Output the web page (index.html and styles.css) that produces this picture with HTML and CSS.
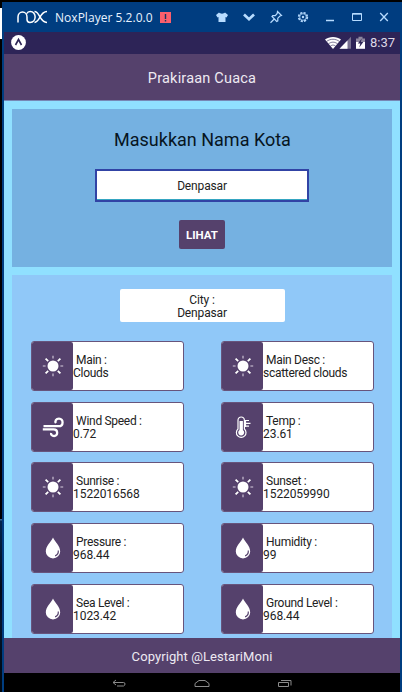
FILE: index.html
```
<!DOCTYPE html>
<html lang="id">
<head>
<meta charset="utf-8">
<title>Prakiraan Cuaca</title>
<link rel="stylesheet" href="styles.css">
</head>
<body>
<svg class="defs" width="0" height="0">
  <symbol id="sun" viewBox="0 0 22 22"><circle cx="11" cy="11" r="5.5" fill="#fff"/><path d="M11 .8v2.8M11 18.4v2.8M.8 11h2.8M18.4 11h2.8" stroke="#d9d0e0" stroke-width="1.1"/><path d="M3.600 3.600l2.600 2.600M18.400 3.600l-2.600 2.600M3.600 18.400l2.600-2.600M18.400 18.400l-2.600-2.600" stroke="#fff" stroke-width="1.8"/></symbol>
  <symbol id="wind" viewBox="0 0 22 22"><g fill="none" stroke="#fff" stroke-width="2.300"><path d="M1.500 10.200h15c5.500 0 5.200-7.600.5-7.600-3 0-4.400 2.400-3 4.400"/><path d="M.8 13.400h10.700c5 0 4.600 6.600.6 6.600-2.300 0-3.300-1.400-3-3"/></g></symbol>
  <symbol id="temp" viewBox="0 0 22 22"><path d="M6 13V4.200a3.200 3.200 0 0 1 6.400 0V13a4.800 4.800 0 1 1-6.400 0z" fill="none" stroke="#fff" stroke-width="1.2"/><path d="M7.500 5h3.400v9a3 3 0 1 1-3.400 0z" fill="#fff"/><path d="M14 4.500h3M14 7.300h4.500M14 10.100h3M13.500 4v7" fill="none" stroke="#fff" stroke-width="1.2"/></symbol>
  <symbol id="drop" viewBox="0 0 22 22"><path d="M11 .5C13 5 18.200 9 18.200 14.400a7.200 7 0 0 1-14.400 0C3.800 9 9 5 11 .5z" fill="#fff"/><path d="M16.300 13.500c.2 2.800-1 4.600-3.200 5.400" fill="none" stroke="#55416c" stroke-width="1.2"/></symbol>
</svg>
<div class="desktop"><i class="strip-white"></i><i class="strip-navy"></i></div>
<div class="window">
  <div class="titlebar">
    <svg class="logo" width="31" height="14" viewBox="0 0 31 14" fill="none" stroke="#fff" stroke-width="1.5"><path d="M1 12.500V7a4.500 5 0 0 1 9 0v2.500c0 1.800 1.200 2.900 3 2.900 6.800 0 6.800-10.800.2-10.800-1.800 0-2.800.8-3.200 2M17.500 1.600c5.500 0 5 10.800 12.500 10.800M30 1.600c-7.500 0-7 10.800-12.500 10.800"/></svg>
    <span class="product">NoxPlayer 5.2.0.0</span>
    <span class="alert"><svg width="11" height="11"><path d="M5.500 2v5M5.500 8v1.500" stroke="#173463" stroke-width="1.400"/></svg></span>
    <div class="tools">
      <svg viewBox="0 0 14 14"><path d="M4 2.500c1 1.500 5 1.500 6 0L13 5l-1.500 2.600L10.500 7v5h-7V7l-1 .6L1 5z" fill="#b7dcff"/></svg>
      <svg viewBox="0 0 14 14"><path d="M2 4.500l5 4.700 5-4.700" fill="none" stroke="#b7dcff" stroke-width="2.700"/></svg>
      <svg viewBox="0 0 14 14"><path d="M8.500 1.500l4 4-1.500.5-2.200 2.200v2.600L7.700 11.500 3 6.500l.8-.9h2.500L8.200 3.500zM5.500 8.800L1.500 12.700" fill="none" stroke="#b7dcff" stroke-width="1.200"/></svg>
      <svg viewBox="0 0 14 14"><circle cx="7" cy="7" r="4.300" fill="none" stroke="#b7dcff" stroke-width="1.700" stroke-dasharray="2.200 1.177"/><circle cx="7" cy="7" r="3.300" fill="none" stroke="#b7dcff" stroke-width=".8"/><circle cx="7" cy="7" r="1.200" fill="#b7dcff"/></svg>
      <svg viewBox="0 0 14 14"><path d="M3 10.500h8" stroke="#b7dcff" stroke-width="1.500"/></svg>
      <svg viewBox="0 0 14 14"><path d="M2.500 3.500h9v7h-9zM2 4.200h10" fill="none" stroke="#b7dcff"/></svg>
      <svg viewBox="0 0 14 14"><path d="M3.200 3l7.600 8M10.800 3l-7.600 8" stroke="#b7dcff" stroke-width="1.300"/></svg>
    </div>
  </div>
  <div class="screen">
    <div class="statusbar">
      <svg width="15" height="15" viewBox="0 0 15 15"><circle cx="7.500" cy="7.500" r="7.400" fill="#fff"/><path d="M4.500 10L7.500 4.500l3 5.500" fill="none" stroke="#2d2555" stroke-width="1.600"/></svg>
      <div class="status-right">
        <svg width="42" height="14" viewBox="0 0 42 14"><path d="M0 3.500C4 0 12 0 16 3.500L8 13z" fill="#fff"/><path d="M1.500 5.500c4-3 9-3 13 0M3.500 7.800c3-2.200 6-2.200 9 0M5.500 10c2-1.300 3-1.300 5 0" fill="none" stroke="#2d2555" stroke-width=".6"/><path d="M14.500 12.800L26 .8v12z" fill="#77708f"/><path d="M14.500 12.800L22.500 4.500v8.300z" fill="#fff"/><path d="M31 2.500h2.500V.8h4v1.700H40v5h-9z" fill="#8d879f"/><path d="M31 6h9v6.800h-9z" fill="#fff"/><path d="M36.800 2.500l-4 5h2.500l-1 4 4-5.500h-2.500z" fill="#2d2555"/></svg>
        <span class="clock">8:37</span>
      </div>
    </div>
    <header class="appbar"><span>Prakiraan Cuaca</span></header>
    <main class="content">
      <section class="search">
        <h1><span>Masukkan Nama Kota</span></h1>
        <div class="field"><span>Denpasar</span></div>
        <div class="button"><span>LIHAT</span></div>
      </section>
      <section class="results">
        <div class="city"><span>City :</span><span>Denpasar</span></div>
        <div class="grid">
          <div class="card"><div class="icon"><svg><use href="#sun"/></svg></div><div class="info"><span class="label">Main :</span><span>Clouds</span></div></div>
          <div class="card"><div class="icon"><svg><use href="#sun"/></svg></div><div class="info"><span class="label">Main Desc :</span><span>scattered clouds</span></div></div>
          <div class="card"><div class="icon"><svg><use href="#wind"/></svg></div><div class="info"><span class="label">Wind Speed :</span><span class="number">0.72</span></div></div>
          <div class="card"><div class="icon"><svg><use href="#temp"/></svg></div><div class="info"><span class="label">Temp :</span><span class="number">23.61</span></div></div>
          <div class="card"><div class="icon"><svg><use href="#sun"/></svg></div><div class="info"><span class="label">Sunrise :</span><span class="number">1522016568</span></div></div>
          <div class="card"><div class="icon"><svg><use href="#sun"/></svg></div><div class="info"><span class="label">Sunset :</span><span class="number">1522059990</span></div></div>
          <div class="card"><div class="icon"><svg><use href="#drop"/></svg></div><div class="info"><span class="label">Pressure :</span><span class="number">968.44</span></div></div>
          <div class="card"><div class="icon"><svg><use href="#drop"/></svg></div><div class="info"><span class="label">Humidity :</span><span class="number">99</span></div></div>
          <div class="card"><div class="icon"><svg><use href="#drop"/></svg></div><div class="info"><span class="label">Sea Level :</span><span class="number">1023.42</span></div></div>
          <div class="card"><div class="icon"><svg><use href="#drop"/></svg></div><div class="info"><span class="label">Ground Level :</span><span class="number">968.44</span></div></div>
        </div>
      </section>
    </main>
    <footer class="footer"><span>Copyright @LestariMoni</span></footer>
    <nav class="navbar">
      <svg viewBox="0 0 16 10"><path d="M5 1L2 3.500 5 6M2 3.500h10.500q1.500 0 1.500 1.500t-1.500 2H6"/></svg>
      <svg viewBox="0 0 16 10"><path d="M1 7.500V4.500L5 1.500h6l4 3v3z"/></svg>
      <svg viewBox="0 0 16 10"><path d="M1.500 3.500h10v4h-10zM4 1.500h10v5"/></svg>
    </nav>
  </div>
</div>
</body>
</html>
```
FILE: styles.css
```
* { box-sizing: border-box; }
body {
  margin: 0;
  width: 402px;
  height: 692px;
  overflow: hidden;
  display: flex;
  background: #000;
  font-family: Roboto, sans-serif;
  font-size: 12px;
}
.defs { position: absolute; }
.desktop { width: 2px; height: 692px; padding-top: 8px; display: flex; flex-direction: column; justify-content: space-between; }
.strip-white { height: 31px; background: #fff; }
.strip-navy { height: 173px; background: linear-gradient(#3a6a94 0 1px, #02264d 2px, #000b18 40%, #03142a 60%, #00070f); }
.window { width: 400px; height: 690px; margin-top: 2px; background: #003d80; }
.titlebar { height: 30px; display: flex; align-items: center; padding-left: 15px; }
.product { width: 97px; margin-left: 7px; font-family: "Open Sans", sans-serif; font-size: 12px; letter-spacing: 0.03px; color: #e8f3ff; white-space: nowrap; }
.alert { width: 11px; height: 11px; margin-left: 8px; background: #fb5f6c; }
.alert svg { display: block; }
.tools { display: flex; gap: 13px; margin-left: 44px; }
.tools svg { width: 14px; height: 14px; flex: none; }
.screen { width: 396px; height: 660px; margin-left: 2px; display: flex; flex-direction: column; }
.statusbar { height: 22px; flex: none; background: #2d2457; display: flex; justify-content: space-between; align-items: center; padding: 0 5px 1px 7px; }
.status-right { display: flex; align-items: center; gap: 3px; }
.clock { color: #ddd9e6; font-size: 13px; line-height: 14px; }
.appbar { height: 47px; flex: none; background: #55416c; border-bottom: 1px solid #7788b5; display: flex; align-items: center; justify-content: center; padding-top: 2px; color: #eeeaf2; font-size: 14.5px; letter-spacing: .2px; }
.content { height: 537px; flex: none; background: #90e0ff; padding: 8px 8px 0; display: flex; flex-direction: column; gap: 8px; }
.search { height: 158px; flex: none; background: #75b1e1; display: flex; flex-direction: column; align-items: center; }
h1 { margin: 19px 0 0; height: 24px; line-height: 24px; font-size: 18px; font-weight: 400; color: #071521; letter-spacing: 0; padding-left: 1px; }
.field { width: 214px; height: 33px; margin-top: 17px; border: 2px solid #3143a5; background: #fff; box-shadow: inset 0 -1px #35a6c2; text-align: center; line-height: 30px; color: #222; letter-spacing: -.15px; }
.button { width: 46px; height: 29px; margin-top: 18px; border-radius: 2px; background: #55416c; color: #fff; font-weight: 700; font-size: 11.5px; line-height: 30px; text-align: center; }
.results { height: 363px; flex: none; background: #90c8f8; padding-top: 14px; display: flex; flex-direction: column; align-items: center; }
.city { width: 165px; height: 33px; border-radius: 2px; background: #fff; color: #222; display: flex; flex-direction: column; align-items: center; justify-content: center; line-height: 13px; padding-top: 2px; letter-spacing: -.15px; }
.grid { margin-top: 19px; display: grid; grid-template-columns: 153px 153px; grid-auto-rows: 50px; gap: 10.7px 37px; }
.card { display: flex; border: 1px solid #67547c; border-radius: 3px; background: #fff; overflow: hidden; }
.icon { width: 41px; flex: none; background: #55416c; border-radius: 0 2px 2px 0; display: flex; align-items: center; justify-content: center; padding-left: 2px; }
.icon svg { width: 22px; height: 22px; }
.info { display: flex; flex-direction: column; justify-content: center; padding: 2px 0 0 .6px; line-height: 13px; color: #222; letter-spacing: -.3px; white-space: nowrap; }
.label { padding-left: 3px; }
.number { letter-spacing: -.1px; }
.footer { height: 35px; flex: none; background: #55416c; color: #eeeaf2; font-size: 13px; letter-spacing: .08px; display: flex; align-items: center; justify-content: center; padding-top: 1px; }
.navbar { height: 19px; flex: none; background: #000; display: flex; justify-content: center; gap: 67px; padding: 6px 0 0; }
.navbar svg { width: 16px; height: 10px; fill: none; stroke: #8b8b8b; stroke-width: 1; }
```
